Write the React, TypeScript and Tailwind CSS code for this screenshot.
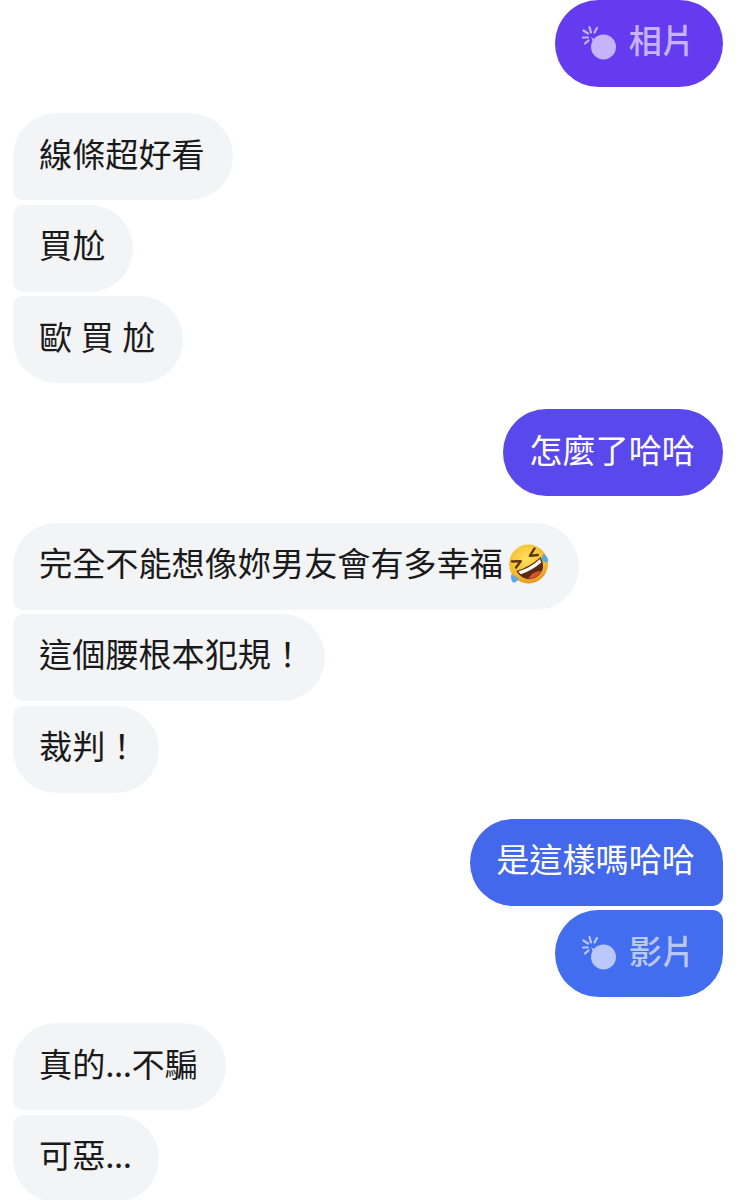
import React from "react";

const font = { fontFamily: '"Noto Sans CJK TC", "Noto Sans", sans-serif' };

function Bomb() {
  return (
    <svg width="36" height="36" viewBox="0 0 36 36" fill="none" className="shrink-0 translate-y-[2px]">
      <circle cx="21.5" cy="23" r="12.5" fill="currentColor" />
      <path d="M9 13 L15 17 L12 20 Z" fill="currentColor" />
      <g stroke="currentColor" strokeWidth="2.2" strokeLinecap="round">
        <path d="M7.5 3 L9 8.5" />
        <path d="M1.5 6.5 L6 9.5" />
        <path d="M1 13.5 L6 13.5" />
        <path d="M3 19.5 L6.5 16.5" />
        <path d="M15 4 L12.5 8.5" />
      </g>
    </svg>
  );
}

function RoflEmoji() {
  return (
    <svg width="44" height="44" viewBox="0 0 42 42" className="-my-3 ml-[4px] shrink-0 translate-y-[1px]">
      <defs>
        <radialGradient id="f" cx="45%" cy="35%" r="70%">
          <stop offset="0%" stopColor="#fde25a" />
          <stop offset="70%" stopColor="#f6b92f" />
          <stop offset="100%" stopColor="#e08a1e" />
        </radialGradient>
      </defs>
      <circle cx="20.5" cy="21" r="18.5" fill="url(#f)" />
      <g transform="rotate(-30 20.5 21)">
        <path d="M7 21 Q20.5 24 34 21 Q33 35 20.5 35.5 Q8 35 7 21 Z" fill="#5a2a12" />
        <path d="M8.5 22.3 Q20.5 25 32.5 22.3 L31.8 25.8 Q20.5 28 9.2 25.8 Z" fill="#ffffff" />
        <path d="M13 33 Q20.5 28.5 28 33 Q20.5 37 13 33 Z" fill="#d9552f" />
        <path d="M8 11 L15.5 15 L8.5 18" fill="none" stroke="#5a3312" strokeWidth="2.2" strokeLinecap="round" strokeLinejoin="round" />
        <path d="M33 11 L25.5 15 L32.5 18" fill="none" stroke="#5a3312" strokeWidth="2.2" strokeLinecap="round" strokeLinejoin="round" />
      </g>
      <path d="M35 11 Q40 15 39 19 Q36 20 33 17 Q33 13 35 11 Z" fill="#5aa9e6" />
      <path d="M4 31 Q3 36 6 39 Q10 38 11 35 Q8 32 4 31 Z" fill="#5aa9e6" />
    </svg>
  );
}

function Left({ children, className }: { children: React.ReactNode; className: string }) {
  return (
    <div className={"flex h-[87px] w-fit shrink-0 items-center bg-[#f3f4f6] pb-[7px] pl-[26px] pr-[28px] text-[33.15px] leading-none text-[#1a1a1a] " + className}>
      <span className="whitespace-pre">{children}</span>
    </div>
  );
}

function Right({ children, className }: { children: React.ReactNode; className: string }) {
  return (
    <div className={"flex h-[87px] w-fit shrink-0 items-center self-end pb-[7px] pl-[26px] pr-[28px] text-[33.15px] leading-none text-white " + className}>
      {children}
    </div>
  );
}

function Mark() {
  return <span className="-mr-[7.5px]">！</span>;
}

function Dots() {
  return <span className="tracking-[-0.5px]">...</span>;
}

export default function App() {
  return (
    <div className="flex h-[1200px] w-[740px] flex-col gap-[26.2px] overflow-hidden bg-white pl-[13px] pr-[17px]" style={font}>
      <div className="flex flex-col">
        <Right className="rounded-[43.5px] bg-[#653bf0] !pl-[27px] !pr-[28px]">
          <span className="flex items-center gap-[11px] font-medium text-[#c5b3fb]">
            <Bomb />
            相片
          </span>
        </Right>
      </div>

      <div className="flex flex-col gap-[4.5px]">
        <Left className="rounded-[43.5px] rounded-bl-[10px]">線條超好看</Left>
        <Left className="rounded-l-[10px] rounded-r-[43.5px]">買尬</Left>
        <Left className="rounded-[43.5px] rounded-tl-[10px] [word-spacing:1px]">歐 買 尬</Left>
      </div>

      <div className="flex flex-col">
        <Right className="rounded-[43.5px] bg-[#5948ec]">怎麼了哈哈</Right>
      </div>

      <div className="flex flex-col gap-[4.5px]">
        <Left className="rounded-[43.5px] rounded-bl-[10px]">
          <span className="flex items-center">
            完全不能想像妳男友會有多幸福
            <RoflEmoji />
          </span>
        </Left>
        <Left className="rounded-l-[10px] rounded-r-[43.5px]">
          這個腰根本犯規
          <Mark />
        </Left>
        <Left className="rounded-[43.5px] rounded-tl-[10px]">
          裁判
          <Mark />
        </Left>
      </div>

      <div className="flex flex-col gap-[4.5px]">
        <Right className="rounded-[43.5px] rounded-br-[10px] bg-[#4368ec]">是這樣嗎哈哈</Right>
        <Right className="rounded-[43.5px] rounded-tr-[10px] bg-[#426dee] !pl-[27px] !pr-[28px]">
          <span className="flex items-center gap-[11px] font-medium text-[#b9c8f9]">
            <Bomb />
            影片
          </span>
        </Right>
      </div>

      <div className="flex flex-col gap-[4.5px]">
        <Left className="rounded-[43.5px] rounded-bl-[10px]">
          真的
          <Dots />
          不騙
        </Left>
        <Left className="rounded-[43.5px] rounded-tl-[10px]">
          可惡
          <Dots />
        </Left>
      </div>
    </div>
  );
}
